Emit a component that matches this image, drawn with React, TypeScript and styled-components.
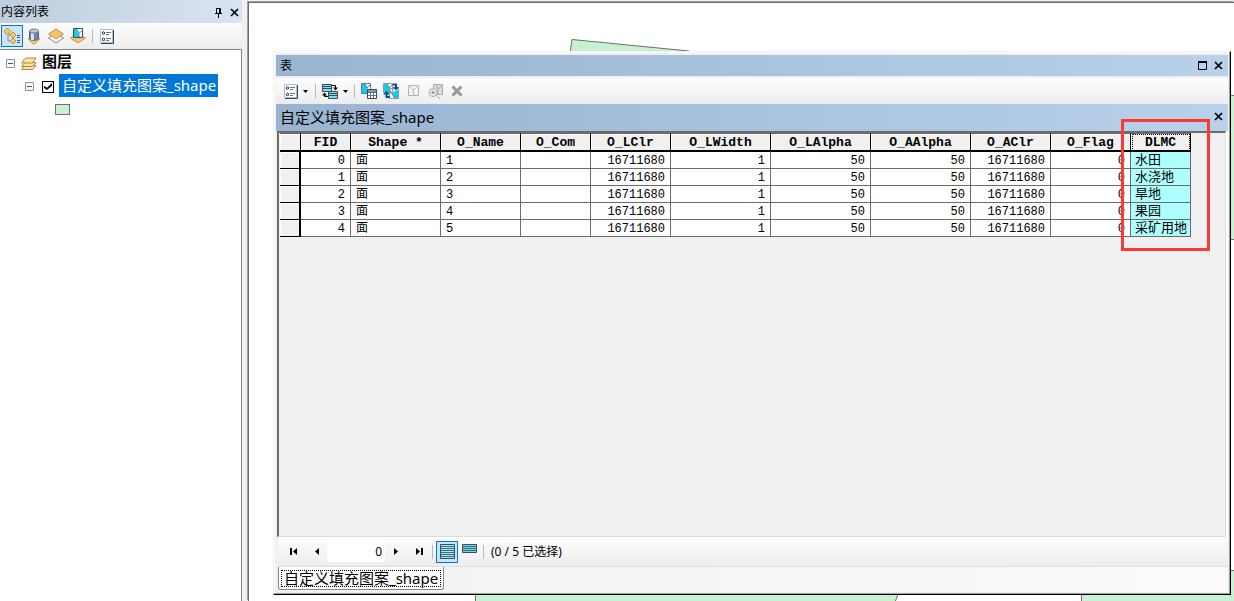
import React from "react";
import styled, { createGlobalStyle } from "styled-components";

const Global = createGlobalStyle`
  *, *::before, *::after { box-sizing: border-box; }
  body { margin: 0; background: #f0f0f0; color: #000; font: 12px/16px "Noto Sans", "Noto Sans CJK SC", sans-serif; }
  button, input { font: inherit; color: inherit; }
  svg { display: block; flex: none; }
`;

const LAYER = "自定义填充图案_shape";

const Shell = styled.div`
  display: flex;
  min-height: 100vh;
  overflow: hidden;
`;

const Sidebar = styled.aside`
  flex: none;
  width: 242px;
  display: flex;
  flex-direction: column;
`;

const PanelTitle = styled.header`
  display: flex;
  align-items: center;
  height: 23px;
  padding: 1px 0 0 1px;
  background: linear-gradient(90deg, #bfcddd, #d9e4f2);
`;

const PanelName = styled.h2`
  flex: 1;
  margin: 0;
  font-size: 12px;
  font-weight: 400;
`;

const PlainButton = styled.button`
  display: flex;
  align-items: center;
  justify-content: center;
  width: 16px;
  height: 16px;
  padding: 0;
  border: 0;
  background: none;
`;

const Tools = styled.div<{ $height: number }>`
  display: flex;
  align-items: center;
  height: ${(p) => p.$height}px;
  padding-left: 1px;
  background: linear-gradient(#fdfdfd, #ededed);
`;

const ToolButton = styled.button<{ $active?: boolean }>`
  display: flex;
  align-items: center;
  justify-content: center;
  width: 22px;
  height: 22px;
  padding: 0;
  border: 1px solid ${(p) => (p.$active ? "#0078d7" : "transparent")};
  background: ${(p) => (p.$active ? "#cce4f7" : "none")};
`;

const MenuButton = styled(ToolButton)`
  width: 32px;
  gap: 5px;
`;

const Divider = styled.span`
  width: 1px;
  height: 14px;
  margin: 0 3px;
  background: #b9b9b9;
`;

const Tree = styled.ul`
  flex: 1;
  margin: 0;
  padding: 2px 0 0 5px;
  list-style: none;
  background: #fff;
  border-top: 1px solid #828790;
  border-right: 1px solid #828790;
  font-size: 15px;
`;

const TreeBranch = styled.ul`
  margin: 0;
  padding: 0 0 0 19px;
  list-style: none;
`;

const TreeRow = styled.div`
  display: flex;
  align-items: center;
  height: 23px;
`;

const Toggle = styled(PlainButton)`
  width: 11px;
  margin-right: 5px;
`;

const GroupName = styled.strong`
  margin: 0 0 5px 5px;
  line-height: 22px;
`;

const Check = styled.input`
  appearance: none;
  width: 12px;
  height: 12px;
  margin: 0 5px 0 2px;
  border: 1px solid #000;
  background: #fff;
  display: grid;
  place-items: center;
  &:checked::before {
    content: "";
    width: 8px;
    height: 7px;
    background: #000;
    clip-path: polygon(0 38%, 38% 68%, 100% 0, 100% 38%, 38% 100%, 0 72%);
  }
`;

const LayerName = styled.label`
  height: 23px;
  margin-bottom: 2px;
  padding: 0 2px 0 3px;
  background: #0078d7;
  color: #fff;
  line-height: 22px;
  white-space: nowrap;
`;

const Swatch = styled.span`
  width: 15px;
  height: 11px;
  margin-left: 31px;
  border: 1px solid #6e6e6e;
  background: #c8f2cf;
`;

const MapPane = styled.main`
  position: relative;
  flex: 1;
  min-width: 0;
  margin: 2px 0 0 6px;
  border-top: 1px solid #696969;
  border-left: 1px solid #696969;
  box-shadow: -1px -1px #a0a0a0;
  background: #fff;
`;

const Parcel = styled.svg<{ $edge: string }>`
  position: absolute;
  inset: ${(p) => p.$edge};
`;

const TableWindow = styled.section`
  position: absolute;
  inset: 48px 3px 6px 24px;
  display: flex;
  flex-direction: column;
  padding: 3px 2px 2px;
  background: #f0f0f0;
  border: 1px solid #f0f0f0;
  border-right: 1px solid #000;
  border-bottom: 1px solid #000;
  box-shadow: inset -1px -1px #a0a0a0, inset 1px 1px #fff;
`;

const WindowBar = styled.header`
  display: flex;
  align-items: center;
  flex: none;
  height: 21px;
  padding: 0 2px 0 4px;
  background: linear-gradient(90deg, #99b4d1, #b9d1ea);
`;

const LayerBar = styled(WindowBar)`
  height: 27px;
  padding-bottom: 2px;
  font-size: 15px;
`;

const BarTitle = styled.h2`
  flex: 1;
  margin: 0;
  font-size: inherit;
  font-weight: 400;
  line-height: 20px;
`;

const TableTools = styled(Tools)`
  flex: none;
  margin-top: 2px;
  padding-left: 4px;
`;

const GridBox = styled.div`
  flex: 1;
  min-height: 0;
  margin: 0 2px 0 1px;
  border-top: 2px solid #6b6b6b;
  border-left: 2px solid #6b6b6b;
  border-right: 1px solid #dedede;
  border-bottom: 1px solid #dedede;
  box-shadow: 2px 0 #fff;
  overflow: hidden;
  padding-left: 1px;
`;

const Grid = styled.table`
  border-collapse: separate;
  border-spacing: 0;
  table-layout: fixed;
  width: 911px;
  font: 12px/14px "Liberation Mono", "Noto Sans CJK SC", monospace;
`;

const HeadCell = styled.th<{ $picked?: boolean }>`
  height: 19px;
  padding: 1px 0 0;
  overflow: hidden;
  background: #f0f0f0;
  border: solid #000;
  border-width: 1px 1px 2px 0;
  border-top-color: #6b6b6b;
  box-shadow: inset 1px 1px #fff;
  outline: ${(p) => (p.$picked ? "1px dotted #000" : "none")};
  outline-offset: -2px;
  font-size: 13px;
  font-weight: 700;
  line-height: 15px;
  white-space: nowrap;
`;

const RowHead = styled.th`
  height: 17px;
  padding: 0;
  background: #f0f0f0;
  border: solid #000;
  border-width: 0 2px 1px 0;
  box-shadow: inset 1px 1px #fff;
`;

const Cell = styled.td<{ $kind: "number" | "text" | "picked" }>`
  height: 17px;
  padding: ${(p) => (p.$kind === "picked" ? "2px 0 0 4px" : "2px 5px 0")};
  border: solid #6b6b6b;
  border-width: 0 1px 1px 0;
  background: ${(p) => (p.$kind === "picked" ? "#affffe" : "#fff")};
  text-align: ${(p) => (p.$kind === "number" ? "right" : "left")};
  font-size: ${(p) => (p.$kind === "picked" ? 13 : 12)}px;
  white-space: nowrap;
`;

const Highlight = styled.div`
  position: absolute;
  top: 67px;
  right: 20px;
  width: 89px;
  height: 132px;
  border: 3px solid #fb3a38;
  pointer-events: none;
`;

const Footer = styled(Tools)`
  flex: none;
  margin-left: 2px;
  padding-left: 5px;
  border-bottom: 1px solid #dedede;
`;

const RecordInput = styled.input`
  width: 58px;
  height: 21px;
  margin: 0;
  padding: 0 3px;
  border: 0;
  background: #fff;
  text-align: right;
`;

const Status = styled.span`
  margin-left: 4px;
`;

const TabStrip = styled.div`
  flex: none;
  height: 25px;
  padding-left: 2px;
  background: linear-gradient(90deg, #f1f1f1, #fbfbfb);
`;

const Tab = styled.button`
  display: block;
  height: 23px;
  padding: 3px 2px 2px;
  border: 1px solid #888;
  border-top: 0;
  border-radius: 0 0 3px 3px;
  background: #fff;
  font-size: 15px;
`;

const TabLabel = styled.span`
  display: block;
  height: 17px;
  padding: 0 2px;
  border: 1px dotted #000;
  line-height: 15px;
`;

const CloseIcon = () => (
  <svg width="9" height="9" viewBox="0 0 9 9">
    <path d="M1 1 8 8M8 1 1 8" stroke="#000" strokeWidth="1.7" />
  </svg>
);

const PinIcon = () => (
  <svg width="9" height="11" viewBox="0 0 9 11" fill="none" stroke="#000">
    <path d="M2.5 1.5h4v5M2.5 1v5.5M5.5 1v5.5M1 6.5h7M4.5 7v4" />
  </svg>
);

const MaximizeIcon = () => (
  <svg width="9" height="9" viewBox="0 0 9 9">
    <path d="M.5 1h8v7.5h-8z" fill="none" stroke="#000" />
    <path d="M0 0h9v2H0z" />
  </svg>
);

const OptionsIcon = () => (
  <svg width="14" height="15" viewBox="0 0 14 15">
    <path d="M.5.5h12v13H.5z" fill="#fff" stroke="#a9bdd4" />
    <path d="M1 14.500h12.500V1" fill="none" stroke="#33475c" />
    <path d="M6 3.500h5M6 5.500h3M6 9.500h5M6 11.500h3" stroke="#62758a" />
    <g fill="#fff" stroke="#14263a">
      <circle cx="3.500" cy="4" r="1.200" />
      <circle cx="3.500" cy="10.500" r="1.200" />
    </g>
  </svg>
);

const Diamond = ({ y, fill, stroke }: { y: number; fill: string; stroke: string }) => (
  <path d={`M.5 ${y + 5} 8 ${y} 15.5 ${y + 5} 8 ${y + 10}z`} fill={fill} stroke={stroke} />
);

const DrawOrderIcon = () => (
  <svg width="18" height="18" viewBox="0 0 18 18">
    <path d="M5 7v7h5M5 8h5" fill="none" stroke="#8a8a8a" />
    <g fill="#f5c869" stroke="#c58f3c">
      <path d="M1 4.500 4.500 1 8 4.500 4.500 8z" />
      <path d="M7 8 10 5l3 3-3 3z" />
      <path d="M7 14l3-3 3 3-3 3z" />
    </g>
    <path d="M14 8.500h3M14 10.500h3M14 13.500h3M14 15.500h3" stroke="#2a6293" />
  </svg>
);

const SourceIcon = () => (
  <svg width="14" height="17" viewBox="0 0 14 17">
    <path d="M1 11l6-3 6 3-6 5.500z" fill="#f4c66b" stroke="#cc953d" />
    <path d="M2.500 3v7c0 3 9 3 9 0V3" fill="#7288a4" stroke="#4c607b" />
    <path d="M5.500 4v8" stroke="#d5dfeb" strokeWidth="3" />
    <ellipse cx="7" cy="3" rx="4.500" ry="2" fill="#b9c9db" stroke="#687d98" />
  </svg>
);

const VisibilityIcon = () => (
  <svg width="16" height="16" viewBox="0 0 16 16">
    <Diamond y={5} fill="#fff" stroke="#888" />
    <Diamond y={1} fill="#f2c572" stroke="#c8913e" />
  </svg>
);

const SelectionIcon = () => (
  <svg width="16" height="16" viewBox="0 0 16 16">
    <Diamond y={5} fill="#f2c572" stroke="#c8913e" />
    <path d="M3.500.5h9v9h-9z" fill="#fff" stroke="#394b5e" />
    <path d="M4 1h3l3 8H4z" fill="#12cde8" />
    <path d="M7 1l2 4 3-2M9 5v4" fill="none" stroke="#8795a3" />
  </svg>
);

const LayersIcon = () => (
  <svg width="16" height="14" viewBox="0 0 16 14" fill="#ffe2a0" stroke="#b8873f">
    <path d="M.5 12.500 4 8.500h11l-3.500 4z" />
    <path d="M.5 9.500 4 5.500h11l-3.500 4z" />
    <path d="M.5 6 4.500 1H15l-3.500 5z" />
  </svg>
);

const CollapseIcon = () => (
  <svg width="9" height="9" viewBox="0 0 9 9">
    <path d="M.5.5h8v8h-8z" fill="#fafafa" stroke="#929292" />
    <path d="M2 4.500h5" stroke="#3155a4" />
  </svg>
);

const CaretIcon = () => (
  <svg width="5" height="3" viewBox="0 0 5 3">
    <path d="M0 0h5L2.500 3z" />
  </svg>
);

const RelatedIcon = () => (
  <svg width="16" height="15" viewBox="0 0 16 15">
    <path d="M.5.500h9v7h-9zM6.500 7.500h9v7h-9z" fill="#7fdfeb" stroke="#394b5e" />
    <path d="M1 2.500h8M1 4.500h8M7 9.500h8M7 11.500h8" stroke="#394b5e" />
    <path d="M10 1.500h3.500V4M6 12.500H2.500V11" fill="none" stroke="#000" />
    <path d="M11 3.500h5l-2.500 3zM0 11.500h5L2.500 8.500z" />
  </svg>
);

const SelectByIcon = () => (
  <svg width="17" height="16" viewBox="0 0 17 16">
    <path d="M.5.500h9v10h-9z" fill="#fff" stroke="#667888" />
    <path d="M1 1h3l3 5v4H1z" fill="#12cde8" />
    <path d="M4 1l2 4 3-3" fill="none" stroke="#667888" />
    <path d="M6.500 6.500h9v9h-9z" fill="#fff" stroke="#394b5e" />
    <path d="M7 7h8v2H7z" fill="#8298b1" />
    <path d="M7 9.500h8M7 12.500h8M9.500 9v6M12.500 9v6" stroke="#60758b" />
  </svg>
);

const SwitchIcon = () => (
  <svg width="17" height="16" viewBox="0 0 17 16">
    <path d="M.5.500h9v9h-9zM6.500 5.500h9v10h-9z" fill="#fff" stroke="#8b98a5" />
    <path d="M1 1h3l3 5v3H1zM9 10l3-2 3-1v8h-4z" fill="#12cde8" />
    <path d="M4 1l2 4 4-4M6 6l3 5 3 4" fill="none" stroke="#667888" />
    <path d="M10 1.500h3V4M3.500 11v3H7" fill="none" stroke="#084d91" strokeWidth="2" />
    <path d="M10 4h6l-3 3.500zM0 11.500h7L3.500 8z" fill="#084d91" />
  </svg>
);

const ClearIcon = () => (
  <svg width="11" height="15" viewBox="0 0 11 15" fill="none" stroke="#b3b3b3">
    <path d="M.5 1.500h10v10H.5zM2 2l3 4 4-3M5 6l1 5" />
  </svg>
);

const ZoomIcon = () => (
  <svg width="15" height="15" viewBox="0 0 15 15" fill="none" stroke="#aaa">
    <path d="M5.500.500h9v10h-9z" fill="#ddd" />
    <path d="M8 1l2 4 4-3M10 5v5M8 11l4 4" />
    <circle cx="5" cy="8.500" r="4" fill="#eee" />
    <path d="M3 8.500h4M5 6.500v4" stroke="#888" />
  </svg>
);

const DeleteIcon = () => (
  <svg width="12" height="12" viewBox="0 0 12 12">
    <path d="M1.500 1.500l9 9M10.500 1.500l-9 9" stroke="#999" strokeWidth="3" />
  </svg>
);

const StepIcon = ({ forward, bar }: { forward?: boolean; bar?: boolean }) => (
  <svg width="9" height="7" viewBox="0 0 9 7">
    <path d={forward ? "M2 0v7l4-3.500z" : "M7 0v7L3 3.500z"} />
    {bar && <path d={forward ? "M7 0h2v7H7z" : "M0 0h2v7H0z"} />}
  </svg>
);

const RowsIcon = ({ all }: { all?: boolean }) => (
  <svg width="15" height="15" viewBox="0 0 15 15">
    <path d={all ? "M.5.500h14v14H.5z" : "M.5.500h14v8H.5z"} fill={all ? "#a5e6ef" : "#78d5df"} stroke="#394b5e" />
    <path
      d={all ? "M1 2.500h13M1 4.500h13M1 6.500h13M1 8.500h13M1 10.500h13M1 12.500h13" : "M1 2.500h13M1 4.500h13M1 6.500h13"}
      stroke="#39707d"
    />
  </svg>
);

const columns: { name: string; width: number }[] = [
  { name: "FID", width: 50 },
  { name: "Shape *", width: 90 },
  { name: "O_Name", width: 80 },
  { name: "O_Com", width: 70 },
  { name: "O_LClr", width: 80 },
  { name: "O_LWidth", width: 100 },
  { name: "O_LAlpha", width: 100 },
  { name: "O_AAlpha", width: 100 },
  { name: "O_AClr", width: 80 },
  { name: "O_Flag", width: 80 },
  { name: "DLMC", width: 60 },
];

const landTypes = ["水田", "水浇地", "旱地", "果园", "采矿用地"];
const rows = landTypes.map((type, i) => [
  i, "面", String(i + 1), "", 16711680, 1, 50, 50, 16711680, 0, type,
]);

const ContentsPanel = () => (
  <Sidebar>
    <PanelTitle>
      <PanelName>内容列表</PanelName>
      <PlainButton aria-label="固定"><PinIcon /></PlainButton>
      <PlainButton aria-label="关闭"><CloseIcon /></PlainButton>
    </PanelTitle>
    <Tools $height={26}>
      <ToolButton $active aria-label="按绘制顺序列出"><DrawOrderIcon /></ToolButton>
      <ToolButton aria-label="按源列出"><SourceIcon /></ToolButton>
      <ToolButton aria-label="按可见性列出"><VisibilityIcon /></ToolButton>
      <ToolButton aria-label="按选择列出"><SelectionIcon /></ToolButton>
      <Divider />
      <ToolButton aria-label="选项"><OptionsIcon /></ToolButton>
    </Tools>
    <Tree>
      <li>
        <TreeRow>
          <Toggle aria-label="折叠图层"><CollapseIcon /></Toggle>
          <LayersIcon />
          <GroupName>图层</GroupName>
        </TreeRow>
        <TreeBranch>
          <li>
            <TreeRow>
              <Toggle aria-label="折叠"><CollapseIcon /></Toggle>
              <Check type="checkbox" id="layer" defaultChecked />
              <LayerName htmlFor="layer">{LAYER}</LayerName>
            </TreeRow>
            <TreeRow><Swatch /></TreeRow>
          </li>
        </TreeBranch>
      </li>
    </Tree>
  </Sidebar>
);

const AttributeTable = () => (
  <Grid>
    <colgroup>
      <col width={21} />
      {columns.map((c) => <col key={c.name} width={c.width} />)}
    </colgroup>
    <thead>
      <tr>
        <HeadCell />
        {columns.map((c) => (
          <HeadCell key={c.name} scope="col" $picked={c.name === "DLMC"}>{c.name}</HeadCell>
        ))}
      </tr>
    </thead>
    <tbody>
      {rows.map((row, r) => (
        <tr key={r}>
          <RowHead scope="row" />
          {row.map((value, c) => (
            <Cell
              key={c}
              $kind={c === columns.length - 1 ? "picked" : typeof value === "number" ? "number" : "text"}
            >
              {value}
            </Cell>
          ))}
        </tr>
      ))}
    </tbody>
  </Grid>
);

const App = () => (
  <>
    <Global />
    <Shell>
      <ContentsPanel />
      <MapPane>
        <Parcel $edge="36px auto auto 321px" width="120" height="14" viewBox="0 0 120 14">
          <path d="M0 14 2 .5 119 12v2z" fill="#c8f2cf" stroke="#6e6e6e" />
        </Parcel>
        <Parcel $edge="92px 0 auto auto" width="6" height="145" viewBox="0 0 6 145">
          <path d="M-1 .5h8v144h-8z" fill="#c8f2cf" stroke="#6e6e6e" />
        </Parcel>
        <Parcel $edge="auto auto 0 226px" width="424" height="8" viewBox="0 0 424 8">
          <path d="M.5 9V-1H424l-4 10z" fill="#c8f2cf" stroke="#6e6e6e" />
        </Parcel>
        <Parcel $edge="auto 0 0 auto" width="153" height="31" viewBox="0 0 153 31">
          <path d="M.5 32V.5H154V32z" fill="#c8f2cf" stroke="#6e6e6e" />
        </Parcel>
        <TableWindow>
          <WindowBar>
            <BarTitle>表</BarTitle>
            <PlainButton aria-label="最大化"><MaximizeIcon /></PlainButton>
            <PlainButton aria-label="关闭窗口"><CloseIcon /></PlainButton>
          </WindowBar>
          <TableTools $height={26}>
            <MenuButton aria-label="表选项"><OptionsIcon /><CaretIcon /></MenuButton>
            <Divider />
            <MenuButton aria-label="相关表"><RelatedIcon /><CaretIcon /></MenuButton>
            <Divider />
            <ToolButton aria-label="按属性选择"><SelectByIcon /></ToolButton>
            <ToolButton aria-label="切换选择"><SwitchIcon /></ToolButton>
            <ToolButton aria-label="清除所选"><ClearIcon /></ToolButton>
            <ToolButton aria-label="缩放至所选"><ZoomIcon /></ToolButton>
            <ToolButton aria-label="删除所选"><DeleteIcon /></ToolButton>
          </TableTools>
          <LayerBar>
            <BarTitle>{LAYER}</BarTitle>
            <PlainButton aria-label="关闭表"><CloseIcon /></PlainButton>
          </LayerBar>
          <GridBox><AttributeTable /></GridBox>
          <Footer $height={30}>
            <ToolButton aria-label="第一条"><StepIcon bar /></ToolButton>
            <ToolButton aria-label="上一条"><StepIcon /></ToolButton>
            <RecordInput aria-label="当前记录" defaultValue="0" />
            <ToolButton aria-label="下一条"><StepIcon forward /></ToolButton>
            <ToolButton aria-label="最后一条"><StepIcon forward bar /></ToolButton>
            <Divider />
            <ToolButton $active aria-label="显示所有记录"><RowsIcon all /></ToolButton>
            <ToolButton aria-label="显示所选记录"><RowsIcon /></ToolButton>
            <Divider />
            <Status>(0 / 5 已选择)</Status>
          </Footer>
          <TabStrip>
            <Tab><TabLabel>{LAYER}</TabLabel></Tab>
          </TabStrip>
          <Highlight />
        </TableWindow>
      </MapPane>
    </Shell>
  </>
);

export default App;
